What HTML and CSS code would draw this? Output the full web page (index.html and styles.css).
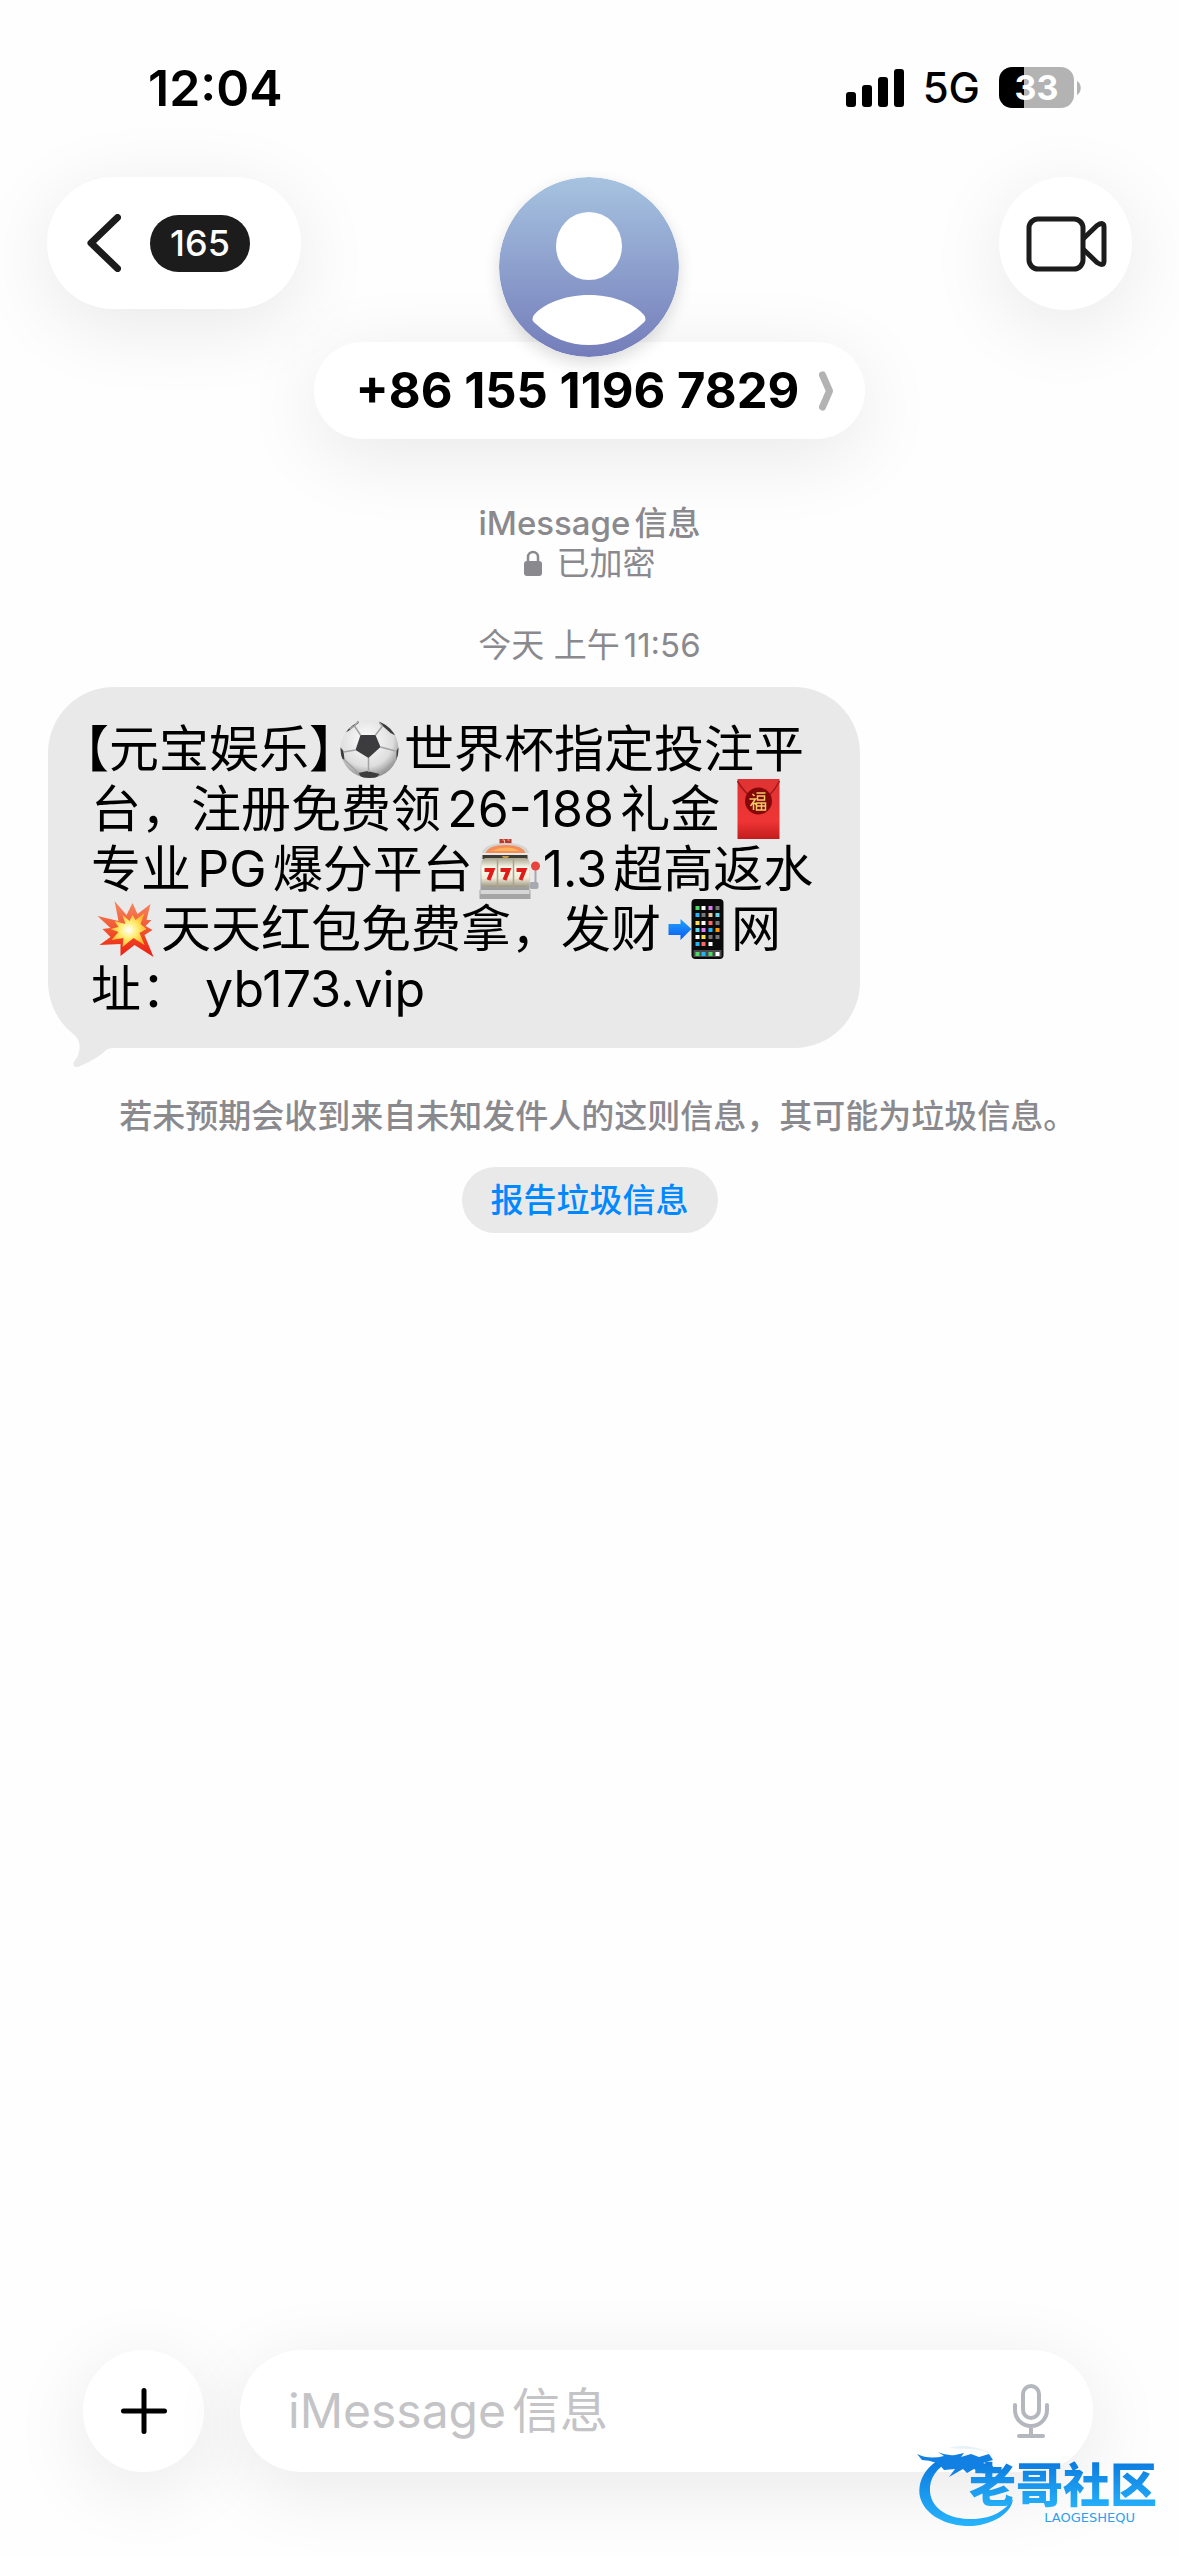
FILE: index.html
```html
<!DOCTYPE html>
<html lang="zh-CN">
<head>
<meta charset="utf-8">
<meta name="viewport" content="width=device-width, initial-scale=1">
<title>+86 155 1196 7829</title>
<link rel="stylesheet" href="styles.css">
</head>
<body>
<div class="status">
  <time class="clock">12:04</time>
  <div class="indicators">
    <svg class="signal" width="58" height="38" viewBox="0 0 58 38" aria-hidden="true">
      <rect x="0" y="23" width="10" height="15" rx="3"/><rect x="16" y="16" width="10" height="22" rx="3"/>
      <rect x="32" y="8" width="10" height="30" rx="3"/><rect x="48" y="0" width="10" height="38" rx="3"/>
    </svg>
    <span class="network">5G</span>
    <span class="battery"><span class="battery-level">33</span>
      <svg width="4" height="14" viewBox="0 0 4 14" aria-hidden="true"><path d="M0 0C5 3 5 11 0 14Z" fill="#b3b3b3"/></svg>
    </span>
  </div>
</div>

<header class="top">
  <button class="back glass" aria-label="返回">
    <svg width="34" height="58" viewBox="0 0 34 58" aria-hidden="true"><path d="M30.500 3.500 4 29l26.500 25.500" fill="none" stroke="#1c1c1c" stroke-width="7" stroke-linecap="round" stroke-linejoin="round"/></svg>
    <span class="unread">165</span>
  </button>
  <div class="contact">
    <svg class="avatar" width="180" height="180" viewBox="0 0 180 180" aria-hidden="true">
      <defs><linearGradient id="sky" x1="0" y1="0" x2="0" y2="1"><stop offset="0" stop-color="#a6c3e0"/><stop offset="1" stop-color="#747dba"/></linearGradient></defs>
      <circle cx="90" cy="90" r="90" fill="url(#sky)"/>
      <ellipse cx="90" cy="69" rx="33" ry="34" fill="#fff"/>
      <path d="M90 118C64 118 43 128 35 138Q31 143 37 147C52 161 70 168 90 168S128 161 143 147Q149 143 145 138C137 128 116 118 90 118Z" fill="#fff"/>
    </svg>
    <button class="name glass">
      <span>+86 155 1196 7829</span>
      <svg width="14" height="40" viewBox="0 0 14 40" aria-hidden="true"><path d="M3.500 4 10.500 20 3.500 36" fill="none" stroke="#b3b3b3" stroke-width="7" stroke-linecap="round" stroke-linejoin="round"/></svg>
    </button>
  </div>
  <button class="video glass" aria-label="视频通话">
    <svg width="82" height="56" viewBox="0 0 82 56" fill="none" stroke="#1c1c1c" stroke-width="5" stroke-linejoin="round" aria-hidden="true"><rect x="4" y="3" width="54" height="50" rx="9"/><path d="M58 23 72 9.500Q79 5 79 11V45Q79 51 72 46.500L58 33"/></svg>
  </button>
</header>

<main class="thread">
  <div class="service">
    <div class="service-name">iMessage信息</div>
    <div class="secure">
      <svg width="18" height="26" viewBox="0 0 18 26" aria-hidden="true"><rect y="11" width="18" height="15" rx="3" fill="#8a8a8e"/><path d="M4 12V7a5 5 0 0 1 10 0v5" fill="none" stroke="#8a8a8e" stroke-width="2.500"/></svg>
      <span>已加密</span>
    </div>
  </div>
  <time class="stamp">今天 上午11:56</time>

  <div class="bubble">
    <p class="text"><span class="half">【</span>元宝娱乐<span class="half">】</span><svg class="emoji" viewBox="0 0 69 60" role="img" aria-label="足球">
      <defs><radialGradient id="ball" cx=".45" cy=".35" r=".65"><stop offset="0" stop-color="#fff"/><stop offset=".7" stop-color="#dedede"/><stop offset="1" stop-color="#8f8f8f"/></radialGradient><clipPath id="ballclip"><circle cx="35" cy="30" r="29"/></clipPath></defs>
      <circle cx="35" cy="30" r="29" fill="url(#ball)"/>
      <g clip-path="url(#ballclip)" fill="#3c3c3e"><path d="m26 16 15 0 5 12-12 11-13-8Z"/><path d="M9 14 15 4 25 0 24 4 14 12ZM43 0 56 6 62 17 56 14 46 5ZM5 27 9 32 10 41 5 38ZM64 28 62 32 62 40 66 36ZM24 54 33 52 45 55 41 60H28Z"/></g>
      <path d="m26 16-6-9m21 9 7-9M46 28l15 4M34 39v14M21 31 9 33M15 10l5-3 4-5m24 5-3-3M10 41l14 13M62 40 45 55" fill="none" stroke="#a3a3a5" stroke-width="1.500"/>
    </svg>世界杯指定投注平<br>台，注册免费领26-188礼金<svg class="emoji" viewBox="0 0 69 60" role="img" aria-label="红包">
      <defs><linearGradient id="packet" x1="0" y1="0" x2="0" y2="1"><stop offset="0" stop-color="#df3333"/><stop offset=".7" stop-color="#ef3535"/><stop offset="1" stop-color="#c31d1d"/></linearGradient></defs>
      <rect x="17" width="42" height="60" fill="url(#packet)"/><path d="M17 2Q27 19 38 20T59 2" fill="none" stroke="#a31717" stroke-width="1.500"/><circle cx="38" cy="22" r="13.500" fill="#850808"/>
      <path d="M32 15l2 2m-5 3h6l-5 7m3-4v8m1-7 2 2m0-12h9m-8 3h7v4h-7zm-1 7h9v7h-9zm0 3h9m-4-3v7" fill="none" stroke="#f3ce68" stroke-width="1.500"/>
    </svg><br>专业PG爆分平台<svg class="emoji" viewBox="0 0 69 60" role="img" aria-label="老虎机">
      <defs><linearGradient id="reel" x1="0" y1="0" x2="0" y2="1"><stop offset="0" stop-color="#aaa58f"/><stop offset=".35" stop-color="#fffef0"/><stop offset=".7" stop-color="#eeead7"/><stop offset="1" stop-color="#9c967f"/></linearGradient><linearGradient id="metal" x1="0" y1="0" x2="0" y2="1"><stop offset="0" stop-color="#ececec"/><stop offset="1" stop-color="#9b9b9b"/></linearGradient></defs>
      <rect x="26" width="12" height="6" fill="#b93930"/><path d="M29 1h2v3m3-3h2" stroke="#ffc0a0" fill="none"/>
      <path d="M8 16Q9 4 32 4T56 16Z" fill="#d4d4d2"/><path d="M12 14Q15 6 32 6T52 14Z" fill="#f48e59"/><path d="M18 12Q32 5 46 12Z" fill="#ffb35b"/>
      <path d="M7 14H56V51H7Z" fill="url(#metal)"/><path d="M9 16H54V20H9Z" fill="#3d3a34"/><path d="M28 17h8l-4 4Z" fill="#c09a3c"/>
      <rect x="8" y="19" width="48" height="29" rx="5" fill="url(#reel)"/><path d="M24 20V48M40 20V48" stroke="#aaa48e" stroke-width="1.500"/>
      <path d="M11 31H19L15 41M27 31H35L31 41M43 31H51L47 41" fill="none" stroke="#e01c18" stroke-width="4"/>
      <path d="M6 51H57V60H6Z" fill="#a5a5a5"/><path d="M7 51H56V55H7Z" fill="#d6d6d6"/><path d="M62 30V47" stroke="#a9a9ad" stroke-width="2"/><rect x="56" y="43" width="9" height="7" rx="2" fill="#a7a9af"/><circle cx="62" cy="27" r="4.500" fill="#e9453f"/>
    </svg>1.3超高返水<br><svg class="emoji" viewBox="0 0 69 60" role="img" aria-label="爆炸">
      <defs><linearGradient id="boom" x1="0" y1="0" x2="0" y2="1"><stop offset="0" stop-color="#f68963"/><stop offset=".6" stop-color="#f04a26"/><stop offset="1" stop-color="#ec1c12"/></linearGradient><radialGradient id="core"><stop offset="0" stop-color="#fff"/><stop offset=".5" stop-color="#ffed70"/><stop offset="1" stop-color="#ffb92d"/></radialGradient></defs>
      <path d="M23 2 35 16 41 4 46 15 59 5 55 21 60 21 54 27 61 31 53 36 62 58 43 46 29 57 29 45 8 46 19 38 11 30 19 29 6 17 27 22Z" fill="url(#boom)"/>
      <path d="M31 16 38 22 41 16 44 21 53 14 49 25 55 30 48 34 53 46 42 39 31 48 32 39 20 41 27 33 19 30 27 28 23 22 34 25Z" fill="url(#core)"/>
    </svg>天天红包免费拿，发财<svg class="emoji" viewBox="0 0 69 60" role="img" aria-label="手机">
      <defs><linearGradient id="arrow" x1="0" y1="0" x2="0" y2="1"><stop offset="0" stop-color="#21a4f7"/><stop offset="1" stop-color="#0a59f4"/></linearGradient></defs>
      <path d="M7 25H19V20L30 30 19 41V36H7Z" fill="url(#arrow)"/><rect x="30" width="32" height="60" rx="4" fill="#0b0b0c"/><path d="M32 51H60V58H32Z" fill="#4a4a4c"/>
      <g fill="#fff"><path d="M40 7h4v4h-4zM40 22h4v4h-4zM34 36h4v4h-4zM47 43h4v4h-4zM54 53h4v4h-4z"/></g>
      <g fill="#4cd964"><path d="M34 7h4v4h-4zM34 53h4v4h-4zM47 53h4v4h-4z"/></g><g fill="#23b5f5"><path d="M34 14h4v4h-4zM47 29h4v4h-4zM34 43h4v4h-4zM40 53h4v4h-4z"/></g>
      <g fill="#ff6961"><path d="M47 22h4v4h-4zM40 43h4v4h-4z"/></g><g fill="#ffe14a"><path d="M34 22h4v4h-4zM40 36h4v4h-4z"/></g>
      <g fill="#777"><path d="M54 7h4v4h-4zM40 14h4v4h-4zM54 22h4v4h-4zM47 36h4v4h-4zM54 36h4v4h-4z"/></g>
      <path d="M47 7h4v4h-4zM40 29h4v4h-4z" fill="#dc7df0"/><path d="M47 14h4v4h-4z" fill="#e8caa0"/><path d="M54 14h4v4h-4zM34 29h4v4h-4z" fill="#64d8ee"/><path d="M54 29h4v4h-4z" fill="#ff9500"/>
    </svg>网<br>址： yb173.vip</p>
    <svg class="tail" width="52" height="40" viewBox="0 0 52 40" aria-hidden="true"><path d="M0 0C10 9 15 15 9 30Q4 35 6 38 8 41 14 37C24 33 33 27 38 22Q41 20 46 20L52 0Z" fill="#e9e9e9"/></svg>
  </div>

  <p class="notice">若未预期会收到来自未知发件人的这则信息，其可能为垃圾信息<span class="half">。</span></p>
  <button class="report">报告垃圾信息</button>
</main>

<footer class="composer">
  <button class="add glass" aria-label="添加"><svg width="46" height="46" viewBox="0 0 46 46" aria-hidden="true"><path d="M23 2.500V43.500M2.500 23H43.500" stroke="#000" stroke-width="5" stroke-linecap="round"/></svg></button>
  <div class="field glass">
    <input class="entry" type="text" placeholder="iMessage信息" aria-label="iMessage信息">
    <button class="mic" aria-label="听写"><svg width="36" height="54" viewBox="0 0 36 54" fill="none" stroke="#b4b7be" stroke-width="4" stroke-linecap="round" aria-hidden="true"><rect x="10" y="2" width="16" height="32" rx="8"/><path d="M2 21v5a16 16 0 0 0 32 0v-5M18 43v8M6 52H30"/></svg></button>
  </div>
  <div class="mark">
    <svg class="dragon" width="100" height="82" viewBox="0 0 100 82" aria-hidden="true">
      <defs><linearGradient id="blue" x1="0" y1="0" x2="0" y2="1"><stop offset="0" stop-color="#0a78de"/><stop offset="1" stop-color="#27b4fb"/></linearGradient></defs>
      <path d="M24 13C9 20 0 35 3 51 8 70 31 81 56 80 76 78 94 68 96 53 88 65 75 72 58 73 35 74 15 65 13 46 12 32 20 21 33 16Z" fill="url(#blue)"/>
      <path d="M0 8Q12 14 27 10L21 6Q29 10 38 9L47 7 44 11 54 8 62 11 72 8 76 14 66 17 76 20 75 26 62 22 68 28 57 23 50 27 46 23 32 31 38 23 27 24Q20 14 5 14Z" fill="#1280e2"/>
      <path d="M31 2Q46-2 60 2T77 10Q65 3 54 3T31 2Z" fill="#e6f2fa"/>
    </svg>
    <div class="mark-text"><div class="mark-name">老哥社区</div><div class="mark-latin">LAOGESHEQU</div></div>
  </div>
</footer>
</body>
</html>
```
FILE: styles.css
```css
*{box-sizing:border-box}
body{
  margin:0;min-height:100vh;display:flex;flex-direction:column;
  background:#fefefe;color:#000;
  font-family:Inter,"Noto Sans CJK SC",sans-serif;
  text-autospace:normal;
}
button{font:inherit;color:inherit;border:0;padding:0;background:none}
svg{display:block;flex:none}
.glass{background:#fff;border-radius:80px;box-shadow:0 16px 80px rgba(0,0,0,.09)}
.half{font-feature-settings:"halt"}

.status{display:flex;justify-content:space-between;align-items:center;height:177px;padding:0 98px 2px 148px}
.clock{font-size:50px;font-weight:600}
.indicators{display:flex;align-items:center;gap:19px}
.network{font-size:42px;font-weight:500}
.battery{display:flex;align-items:center;gap:3px}
.battery-level{
  width:75px;height:41px;border-radius:13px;text-align:center;
  font-size:34px;line-height:41px;font-weight:700;color:#fff;
  background:linear-gradient(90deg,#000 33%,#b3b3b3 33%);
}

.top{display:grid;grid-template-columns:1fr auto 1fr;align-items:start;padding:0 47px}
.back{display:flex;align-items:center;gap:29px;justify-self:start;height:132px;padding:0 51px 0 40px}
.unread{min-width:100px;height:57px;border-radius:29px;background:#1c1c1c;color:#fff;font-size:36px;line-height:57px;font-weight:500;text-align:center}
.contact{display:flex;flex-direction:column;align-items:center}
.avatar{position:relative;margin-bottom:-15px;border-radius:50%;box-shadow:0 6px 16px rgba(0,0,0,.14)}
.name{display:flex;align-items:center;gap:20px;height:97px;padding:0 32px 0 42px;font-size:49px;font-weight:700}
.video{display:grid;place-items:center;justify-self:end;width:133px;height:133px}

.thread{display:flex;flex-direction:column;align-items:center;padding:64px 48px}
.service,.stamp,.notice,.report{font-size:33px;line-height:40px}
.service,.stamp,.notice{color:#8a8a8e}
.service{display:flex;flex-direction:column;align-items:center}
.service-name{font-weight:500}
.secure{display:flex;align-items:center;gap:15px}
.stamp{margin-top:42px}
.bubble{position:relative;align-self:flex-start;margin-top:22px;padding:32px 47px 29px 43px;border-radius:66px;background:#e9e9e9}
.text{margin:0;font-size:50px;line-height:60px;text-indent:-7px;white-space:nowrap}
.emoji{display:inline-block;width:70px;height:60px;vertical-align:top}
.tail{position:absolute;left:20px;bottom:-20px}
.notice{margin:48px 0 31px;font-weight:500}
.report{height:66px;padding:0 29px;border-radius:33px;background:#e9e9e9;color:#08f;font-weight:500}

.composer{position:relative;display:flex;gap:36px;margin-top:auto;padding:0 86px 84px 83px}
.add{display:grid;place-items:center;flex:none;width:121px;height:122px}
.field{display:flex;align-items:center;flex:1;min-width:0;height:122px;padding:0 44px 0 48px}
.entry{flex:1;min-width:0;border:0;outline:0;padding:0;background:none;font:inherit;font-size:48px;line-height:60px;color:#000}
.entry::placeholder{color:#c4c4c7;opacity:1}
.mark{position:absolute;right:22px;bottom:28px;display:flex;align-items:flex-end}
.mark-text{display:flex;flex-direction:column;align-items:flex-end;margin-left:-48px;padding-bottom:4px}
.mark-name{font-size:47px;line-height:52px;font-weight:900;background:linear-gradient(#0a78de,#27b4fb);background-clip:text;color:transparent}
.mark-latin{margin-right:22px;font-family:"DejaVu Sans",sans-serif;font-size:13px;line-height:13px;font-weight:400;color:#2f9fee}
```
